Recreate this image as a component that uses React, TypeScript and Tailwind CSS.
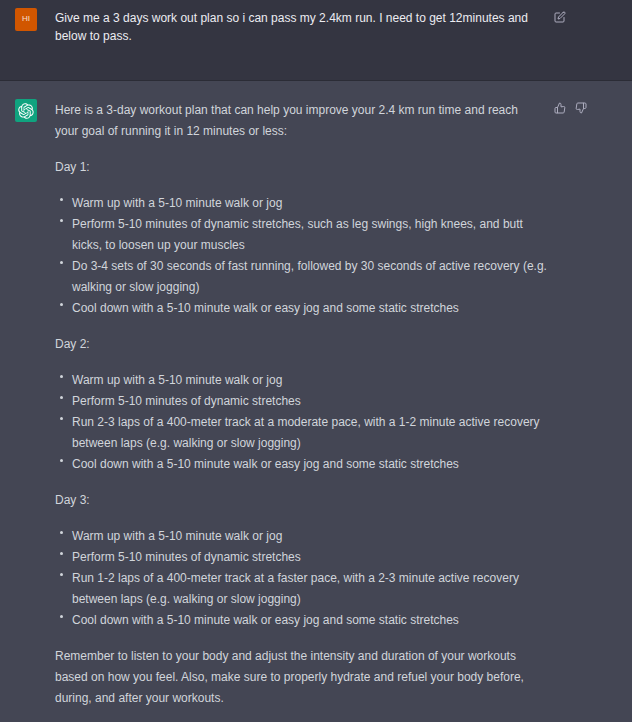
import type { ReactNode } from "react";
import { FiEdit, FiThumbsDown, FiThumbsUp } from "react-icons/fi";

const days = [
  {
    title: "Day 1:",
    items: [
      "Warm up with a 5-10 minute walk or jog",
      "Perform 5-10 minutes of dynamic stretches, such as leg swings, high knees, and butt kicks, to loosen up your muscles",
      "Do 3-4 sets of 30 seconds of fast running, followed by 30 seconds of active recovery (e.g. walking or slow jogging)",
      "Cool down with a 5-10 minute walk or easy jog and some static stretches",
    ],
  },
  {
    title: "Day 2:",
    items: [
      "Warm up with a 5-10 minute walk or jog",
      "Perform 5-10 minutes of dynamic stretches",
      "Run 2-3 laps of a 400-meter track at a moderate pace, with a 1-2 minute active recovery between laps (e.g. walking or slow jogging)",
      "Cool down with a 5-10 minute walk or easy jog and some static stretches",
    ],
  },
  {
    title: "Day 3:",
    items: [
      "Warm up with a 5-10 minute walk or jog",
      "Perform 5-10 minutes of dynamic stretches",
      "Run 1-2 laps of a 400-meter track at a faster pace, with a 2-3 minute active recovery between laps (e.g. walking or slow jogging)",
      "Cool down with a 5-10 minute walk or easy jog and some static stretches",
    ],
  },
];

function Logo() {
  return (
    <svg viewBox="0 0 41 41" className="size-4" fill="currentColor" aria-hidden="true">
      <path d="M37.5324 16.8707C37.9808 15.5241 38.1363 14.0974 37.9886 12.6859C37.8409 11.2744 37.3934 9.91076 36.676 8.68622C35.6126 6.83404 33.9882 5.3676 32.0373 4.4985C30.0864 3.62941 27.9098 3.40259 25.8215 3.85078C24.8796 2.7893 23.7219 1.94125 22.4257 1.36341C21.1295 0.785575 19.7249 0.491269 18.3058 0.500197C16.1708 0.495044 14.0893 1.16803 12.3614 2.42214C10.6335 3.67624 9.34853 5.44666 8.6917 7.47815C7.30085 7.76286 5.98686 8.3414 4.8377 9.17505C3.68854 10.0087 2.73073 11.0782 2.02839 12.312C0.956464 14.1591 0.498905 16.2988 0.721698 18.4228C0.944492 20.5467 1.83612 22.5449 3.268 24.1293C2.81966 25.4759 2.66413 26.9026 2.81182 28.3141C2.95951 29.7256 3.40701 31.0892 4.12437 32.3138C5.18791 34.1659 6.8123 35.6322 8.76321 36.5013C10.7141 37.3704 12.8907 37.5973 14.9789 37.1492C15.9208 38.2107 17.0786 39.0587 18.3747 39.6366C19.6709 40.2144 21.0755 40.5087 22.4946 40.4998C24.6307 40.5054 26.7133 39.8321 28.4418 38.5772C30.1704 37.3223 31.4556 35.5506 32.1119 33.5179C33.5027 33.2332 34.8167 32.6547 35.9659 31.821C37.115 30.9874 38.0728 29.9178 38.7752 28.684C39.8458 26.8371 40.3023 24.6979 40.0789 22.5748C39.8556 20.4517 38.9639 18.4544 37.5324 16.8707ZM22.4978 37.8849C20.7443 37.8874 19.0459 37.2733 17.6994 36.1501C17.7601 36.117 17.8666 36.0586 17.936 36.0161L25.9004 31.4156C26.1003 31.3019 26.2663 31.137 26.3813 30.9378C26.4964 30.7386 26.5563 30.5124 26.5549 30.2825V19.0542L29.9213 20.998C29.9389 21.0068 29.9541 21.0198 29.9656 21.0359C29.977 21.052 29.9842 21.0707 29.9867 21.0902V30.3889C29.9842 32.375 29.1946 34.2791 27.7909 35.6841C26.3872 37.0892 24.4838 37.8806 22.4978 37.8849ZM6.39227 31.0064C5.51397 29.4888 5.19742 27.7107 5.49804 25.9832C5.55718 26.0187 5.66048 26.0818 5.73461 26.1244L13.699 30.7248C13.8975 30.8408 14.1233 30.902 14.3532 30.902C14.583 30.902 14.8088 30.8408 15.0073 30.7248L24.731 25.1103V28.9979C24.7321 29.0177 24.7283 29.0376 24.7199 29.0556C24.7115 29.0736 24.6988 29.0893 24.6829 29.1012L16.6317 33.7497C14.9096 34.7416 12.8643 35.0097 10.9447 34.4954C9.02506 33.9811 7.38785 32.7263 6.39227 31.0064ZM4.29707 13.6194C5.17156 12.0998 6.55279 10.9364 8.19885 10.3327C8.19885 10.4013 8.19491 10.5228 8.19491 10.6071V19.808C8.19351 20.0378 8.25334 20.2638 8.36823 20.4629C8.48312 20.6619 8.64893 20.8267 8.84863 20.9404L18.5723 26.5542L15.206 28.4979C15.1894 28.5089 15.1703 28.5155 15.1505 28.5173C15.1307 28.5191 15.1107 28.516 15.0924 28.5082L7.04046 23.8557C5.32135 22.8601 4.06716 21.2235 3.55289 19.3046C3.03862 17.3858 3.30624 15.3413 4.29707 13.6194ZM31.955 20.0556L22.2312 14.4411L25.5976 12.4981C25.6142 12.4872 25.6333 12.4805 25.6531 12.4787C25.6729 12.4769 25.6928 12.4801 25.7111 12.4879L33.7631 17.1364C34.9967 17.849 36.0017 18.8982 36.6606 20.1613C37.3194 21.4244 37.6047 22.849 37.4832 24.2684C37.3617 25.6878 36.8382 27.0432 35.9743 28.1759C35.1103 29.3086 33.9415 30.1717 32.6047 30.6641C32.6047 30.5947 32.6047 30.4733 32.6047 30.3889V21.188C32.6066 20.9586 32.5474 20.7328 32.4332 20.5338C32.319 20.3348 32.154 20.1698 31.955 20.0556ZM35.3055 15.0128C35.2464 14.9765 35.1431 14.9142 35.069 14.8717L27.1045 10.2712C26.906 10.1554 26.6803 10.0943 26.4504 10.0943C26.2206 10.0943 25.9948 10.1554 25.7963 10.2712L16.0726 15.8858V11.9982C16.0715 11.9783 16.0753 11.9585 16.0837 11.9405C16.0921 11.9225 16.1048 11.9068 16.1207 11.8949L24.1719 7.25025C25.4053 6.53903 26.8158 6.19376 28.2383 6.25482C29.6608 6.31589 31.0364 6.78077 32.2044 7.59508C33.3723 8.40939 34.2842 9.53945 34.8334 10.8531C35.3826 12.1667 35.5464 13.6095 35.3055 15.0128ZM14.2424 21.9419L10.8752 19.9981C10.8576 19.9893 10.8423 19.9763 10.8309 19.9602C10.8195 19.9441 10.8122 19.9254 10.8098 19.9058V10.6071C10.8107 9.18295 11.2173 7.78848 11.9819 6.58696C12.7466 5.38544 13.8377 4.42659 15.1275 3.82264C16.4173 3.21869 17.8524 2.99464 19.2649 3.1767C20.6775 3.35876 22.0089 3.93941 23.1034 4.85067C23.0427 4.88379 22.937 4.94215 22.8668 4.98473L14.9024 9.58517C14.7025 9.69878 14.5366 9.86356 14.4215 10.0626C14.3065 10.2616 14.2466 10.4877 14.2479 10.7175L14.2424 21.9419ZM16.071 17.9991L20.4018 15.4978L24.7325 17.9975V22.9985L20.4018 25.4983L16.071 22.9985V17.9991Z" />
    </svg>
  );
}

function IconButton({ label, children }: { label: string; children: ReactNode }) {
  return (
    <button type="button" aria-label={label} className="text-[#acacbe] hover:text-white">
      {children}
    </button>
  );
}

export default function App() {
  return (
    <main className="min-h-screen bg-[#444654] font-['Segoe_UI','Liberation_Sans',sans-serif] text-xs">
      <section className="flex items-start border-b border-[#2b2c36] bg-[#343541] pt-2 pr-11 pb-[35px] pl-[15px] text-[#ececf1]">
        <div className="flex h-[23px] w-[22px] shrink-0 items-center justify-center rounded-xs bg-[#d15600] text-[8px] text-white/80">
          HI
        </div>
        <p className="ml-[18px] min-w-0 flex-1 pt-px leading-[18px]">
          Give me a 3 days work out plan so i can pass my 2.4km run. I need to get 12minutes and below to
          pass.
        </p>
        <div className="ml-[6px] flex w-[34px] pt-[3px]">
          <IconButton label="Edit message">
            <FiEdit className="size-3" />
          </IconButton>
        </div>
      </section>

      <section className="flex items-start pt-[18px] pr-11 pb-[11px] pl-[15px] text-[#d1d5db]">
        <div className="flex h-[23px] w-[22px] shrink-0 items-center justify-center rounded-xs bg-[#10a37f] text-white">
          <Logo />
        </div>
        <div className="ml-[18px] flex min-w-0 flex-1 flex-col gap-[15px] pt-px leading-[21px]">
          <p className="pr-2">
            Here is a 3-day workout plan that can help you improve your 2.4 km run time and reach your goal
            of running it in 12 minutes or less:
          </p>
          {days.map((day) => (
            <div key={day.title} className="flex flex-col gap-[15px]">
              <p>{day.title}</p>
              <ul>
                {day.items.map((item) => (
                  <li
                    key={item}
                    className="flex pl-[5px] before:mt-[5px] before:mr-[9px] before:size-[3px] before:shrink-0 before:rounded-full before:bg-[#d1d5db]"
                  >
                    <span>{item}</span>
                  </li>
                ))}
              </ul>
            </div>
          ))}
          <p className="pr-2">
            Remember to listen to your body and adjust the intensity and duration of your workouts based on
            how you feel. Also, make sure to properly hydrate and refuel your body before, during, and after
            your workouts.
          </p>
        </div>
        <div className="ml-[6px] flex w-[34px] gap-[9px] pt-[3px]">
          <IconButton label="Good response">
            <FiThumbsUp className="size-3" />
          </IconButton>
          <IconButton label="Bad response">
            <FiThumbsDown className="size-3" />
          </IconButton>
        </div>
      </section>
    </main>
  );
}
